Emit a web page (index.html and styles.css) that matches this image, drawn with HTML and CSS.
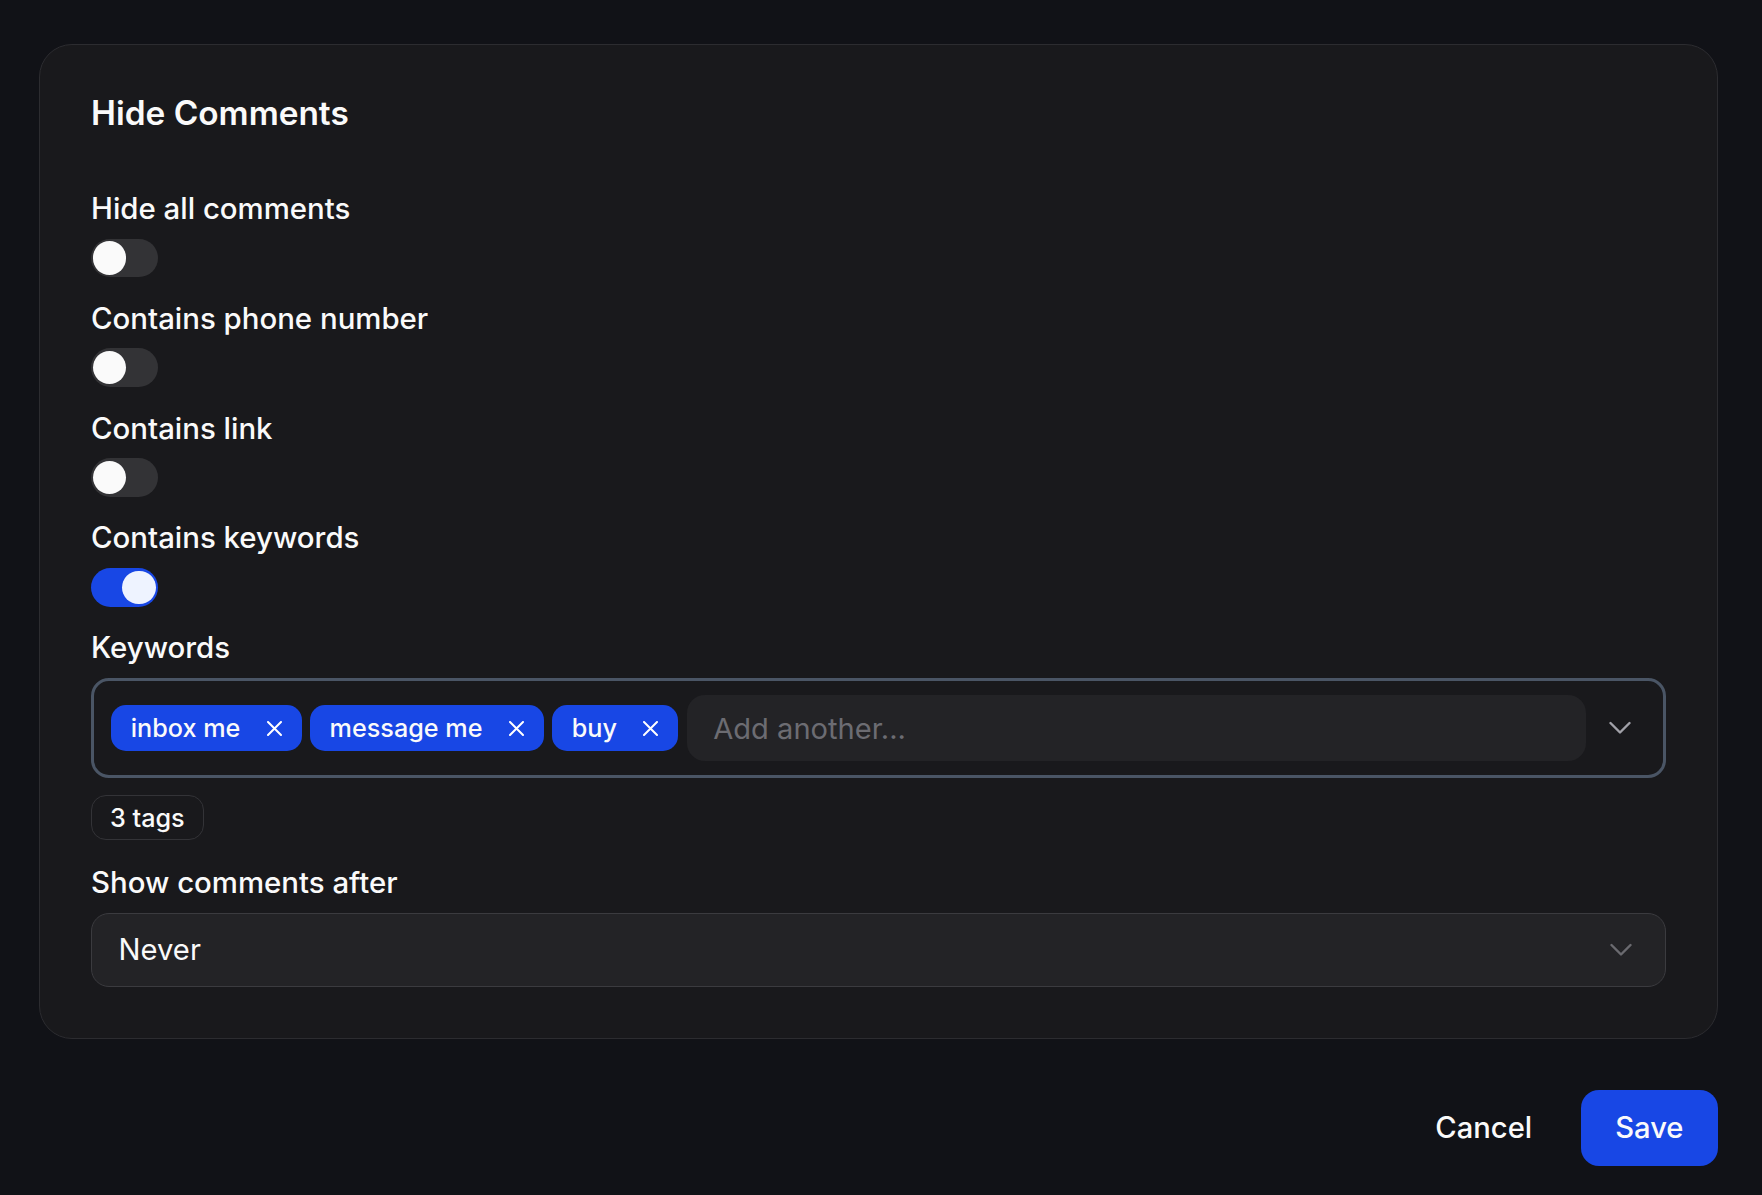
FILE: index.html
```html
<!DOCTYPE html>
<html lang="en">
<head>
    <meta charset="UTF-8">
    <meta name="viewport" content="width=device-width, initial-scale=1.0">
    <title>Hide Comments</title>
    <link rel="stylesheet" href="styles.css">
</head>
<body>
    <div class="page">
        <section class="card">
            <h2 class="card-title">Hide Comments</h2>

            <div class="fields">
                <div class="field">
                    <label class="field-label">Hide all comments</label>
                    <span class="switch"><span class="knob"></span></span>
                </div>

                <div class="field">
                    <label class="field-label">Contains phone number</label>
                    <span class="switch"><span class="knob"></span></span>
                </div>

                <div class="field">
                    <label class="field-label">Contains link</label>
                    <span class="switch"><span class="knob"></span></span>
                </div>

                <div class="field">
                    <label class="field-label">Contains keywords</label>
                    <span class="switch on"><span class="knob"></span></span>
                </div>

                <div class="field">
                    <label class="field-label">Keywords</label>
                    <div class="tag-input">
                        <span class="tag">inbox me
                            <svg class="tag-x" viewBox="0 0 15 15"><path d="M1 1 14 14M14 1 1 14"/></svg>
                        </span>
                        <span class="tag">message me
                            <svg class="tag-x" viewBox="0 0 15 15"><path d="M1 1 14 14M14 1 1 14"/></svg>
                        </span>
                        <span class="tag">buy
                            <svg class="tag-x" viewBox="0 0 15 15"><path d="M1 1 14 14M14 1 1 14"/></svg>
                        </span>
                        <input class="tag-entry" type="text" placeholder="Add another...">
                        <span class="tag-chevron">
                            <svg class="chevron" viewBox="0 0 22 14"><path d="M1.5 2 11 11.5 20.5 2"/></svg>
                        </span>
                    </div>
                    <span class="tag-count">3 tags</span>
                </div>

                <div class="field">
                    <label class="field-label">Show comments after</label>
                    <div class="select">
                        <span>Never</span>
                        <svg class="chevron dim" viewBox="0 0 22 14"><path d="M1.5 2 11 11.5 20.5 2"/></svg>
                    </div>
                </div>
            </div>
        </section>

        <div class="actions">
            <button class="btn btn-ghost">Cancel</button>
            <button class="btn btn-primary">Save</button>
        </div>
    </div>
</body>
</html>
```

FILE: styles.css
```css
* {
    box-sizing: border-box;
}

body {
    margin: 0;
    background-color: #111217;
    color: #fafafa;
    font-family: Inter, "Noto Sans", sans-serif;
}

.page {
    padding: 44px 44px 0 39px;
}

/* Settings card */
.card {
    background-color: #19191c;
    border: 1.65px solid #2c2c30;
    border-radius: 33px;
    padding: 45px 51px 51px 51px;
}

.card-title {
    margin: 0 0 49.6px;
    font-size: 33.4px;
    font-weight: 600;
    line-height: 46.2px;
}

.fields {
    display: flex;
    flex-direction: column;
    gap: 18.4px;
}

.field {
    display: flex;
    flex-direction: column;
    align-items: flex-start;
    gap: 6.6px;
}

.field-label {
    font-size: 29.4px;
    font-weight: 500;
    line-height: 46.2px;
}

/* Toggle switch */
.switch {
    position: relative;
    width: 66.7px;
    height: 38.7px;
    border-radius: 20px;
    background-color: #333336;
}

.switch .knob {
    position: absolute;
    top: 2.7px;
    left: 1.8px;
    width: 33.3px;
    height: 33.3px;
    border-radius: 50%;
    background-color: #fafafa;
}

.switch.on {
    background-color: #1847e5;
}

.switch.on .knob {
    left: 31.4px;
    background-color: #eef3ff;
}

/* Keyword tags */
.tag-input {
    align-self: stretch;
    display: flex;
    align-items: center;
    gap: 8.4px;
    height: 100px;
    padding: 0 17px 0 17px;
    border: 3px solid #4a5565;
    border-radius: 18px;
}

.tag {
    display: flex;
    align-items: center;
    gap: 26.5px;
    height: 45.7px;
    padding: 0 19.7px;
    border-radius: 15px;
    background-color: #1847e5;
    font-size: 25.2px;
    font-weight: 500;
    white-space: nowrap;
}

.tag-x {
    width: 15px;
    height: 15px;
    fill: none;
    stroke: #ffffff;
    stroke-width: 2;
    stroke-linecap: round;
}

.tag-entry {
    flex: 1;
    min-width: 0;
    height: 66.7px;
    padding: 0 26.6px;
    border: none;
    border-radius: 18px;
    background-color: #232326;
    color: #fafafa;
    font-family: Inter, "Noto Sans", sans-serif;
    font-size: 29.1px;
    outline: none;
}

.tag-entry::placeholder {
    color: #6c6c72;
}

.tag-chevron {
    width: 52px;
    display: flex;
    justify-content: center;
}

.chevron {
    width: 22px;
    height: 14px;
    fill: none;
    stroke: #a1a1a8;
    stroke-width: 2.4;
    stroke-linecap: round;
    stroke-linejoin: round;
}

.chevron.dim {
    stroke: #6a6a6f;
}

.tag-count {
    margin: 10.8px 0 2px;
    height: 44.3px;
    display: flex;
    align-items: center;
    padding: 0 18px;
    border: 1.65px solid #333337;
    border-radius: 15px;
    font-size: 25.2px;
    font-weight: 500;
}

/* Select */
.select {
    align-self: stretch;
    display: flex;
    align-items: center;
    justify-content: space-between;
    height: 74px;
    padding: 0 33.5px 0 26.6px;
    border: 1.65px solid #3b3b3f;
    border-radius: 18px;
    background-color: #232326;
    font-size: 29.2px;
}

/* Footer buttons */
.actions {
    display: flex;
    justify-content: flex-end;
    gap: 14px;
    margin-top: 51.3px;
}

.btn {
    height: 75.4px;
    padding: 0 34.5px;
    border: none;
    border-radius: 18px;
    font-family: Inter, "Noto Sans", sans-serif;
    font-size: 29.2px;
    font-weight: 500;
    color: #fafafa;
    cursor: pointer;
}

.btn-ghost {
    background: transparent;
}

.btn-primary {
    background-color: #1847e5;
}
```
